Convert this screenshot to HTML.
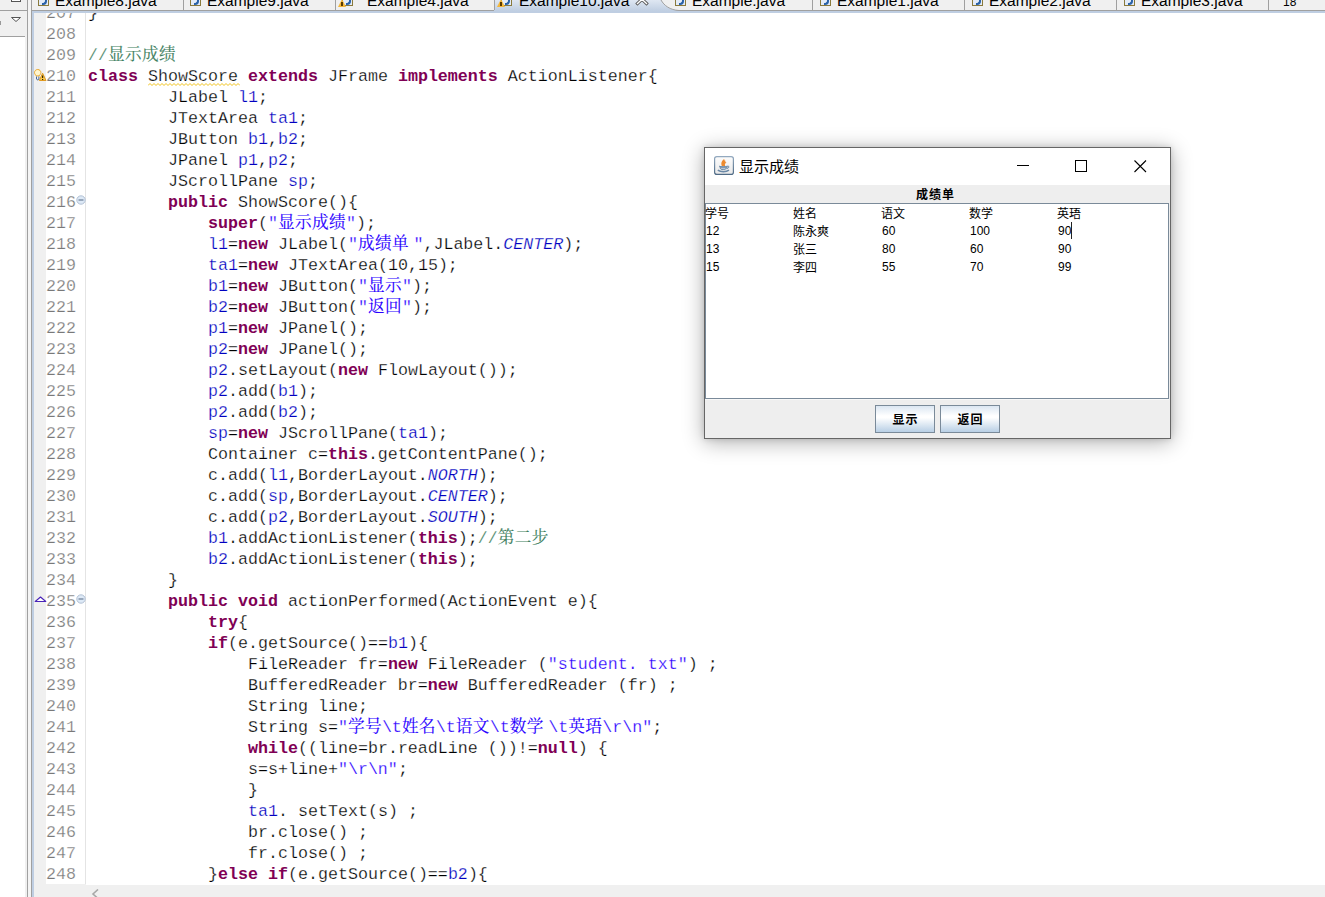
<!DOCTYPE html>
<html lang="zh"><head><meta charset="utf-8"><title>Example10.java - Eclipse</title>
<style>
html,body{margin:0;padding:0}
body{width:1325px;height:897px;overflow:hidden;position:relative;background:#fff;font-family:"Liberation Sans","Noto Sans CJK SC",sans-serif;color:#000}
div,span,b,i{box-sizing:border-box}
.abs{position:absolute}
/* left strip */
#lp{position:absolute;left:0;top:0;width:28px;height:897px;background:#f0f0f0;border-right:1px solid #a0a0a0}
#lp .h1{position:absolute;left:0;top:10px;width:27px;height:1px;background:#a0a0a0}
#lp .wh{position:absolute;left:0;top:36px;width:25px;height:861px;background:#fff;border-top:1px solid #a0a0a0}
.wi:after{content:"";position:absolute;left:-1px;top:3px;width:1.500px;height:4px;background:#5a3a00}
#gap{position:absolute;left:28px;top:0;width:3px;height:897px;background:#f4f4f4}
/* editor frame */
#ed{position:absolute;left:31px;top:0;width:1294px;height:897px;background:#fff;border-left:1px solid #a0a0a0;overflow:hidden}
#tabs{position:absolute;left:0;top:0;width:1293px;height:11px;background:#f0f0f0;overflow:hidden}
#tabline{position:absolute;left:0;top:10px;z-index:0;width:1293px;height:1px;background:#a0a0a0}
#band{position:absolute;left:0;top:11px;width:1293px;height:2px;background:#bfcee2}
#bandl{position:absolute;left:0;top:11px;width:2px;height:886px;background:#bfcee2}
.tab{position:absolute;top:0;height:10px;width:152px;border-right:1px solid #a0a0a0}
.tab .t{position:absolute;top:-9px;font-size:15.5px;line-height:20px;white-space:nowrap;color:#000}
.ji{position:absolute;top:-6px;width:11px;height:12px;border:1px solid #8a7a3c;background:#e4ecf8}
.ji:after{content:"";position:absolute;left:3px;top:3px;width:3px;height:5px;border:2px solid #2a62a8;border-top:none;border-left:none;border-radius:0 0 4px 0}
.wi{position:absolute;top:4px;left:-5px;z-index:2;border-bottom-color:#f3b63a !important;width:0;height:0;border-left:4px solid transparent;border-right:4px solid transparent;border-bottom:8px solid #e8a317}
#act{position:absolute;left:462px;top:0;width:190px;height:11px}
/* code */
#gut{position:absolute;left:2px;top:13px;width:12px;height:871px;background:#f0f0f0}
#sep{position:absolute;left:53px;top:13px;width:1px;height:871px;background:#e4e4e4}
#code{position:absolute;left:0;top:13px;width:1293px;height:871px;overflow:hidden;font-family:"Liberation Mono","Noto Sans CJK SC",monospace;font-size:16.667px}
#code .ln,#code .cl{position:absolute;height:21px;line-height:21px;white-space:pre}
#code .ln{left:14px;color:#787878;-webkit-text-stroke:.25px #fff}
#code .cl{left:56px;color:#000;-webkit-text-stroke:.25px #fff}
.k{color:#7f0055;font-weight:bold}
.f{color:#0000c0}
.s{color:#2a00ff}
.c{color:#3f7f5f}
.j{-webkit-text-stroke:.12px currentColor;line-height:0;position:relative;top:0;letter-spacing:.333px;font-family:"Noto Serif CJK SC","Noto Sans CJK SC",serif}
.n{letter-spacing:-5.5px}
.k,.k *{-webkit-text-stroke:0}
#hsb{position:absolute;left:2px;top:885px;width:1291px;height:12px;background:#f0f0f0}
#hsb2{position:absolute;left:2px;top:884px;width:52px;height:1px;background:#f0f0f0}
/* swing window */
#win{position:absolute;left:704px;top:147px;width:467px;height:292px;border:1px solid #666;background:#eee;box-shadow:0 3px 20px rgba(0,0,0,.32),0 0 6px rgba(0,0,0,.14)}
#tb{position:absolute;left:0;top:0;width:465px;height:37px;background:#fff}
#tb .tt{position:absolute;left:34px;top:8px;font-size:15px;line-height:22px;white-space:nowrap}
#lab{position:absolute;left:0;top:38px;width:461px;height:18px;text-align:center;font-size:12px;font-weight:bold;line-height:18px;letter-spacing:1px}
#ta{box-shadow:0 1px 0 #f8f8f8;position:absolute;left:0;top:55px;width:464px;height:196px;border:1px solid #7a8a99;background:#fff;font-size:12px}
#ta span{position:absolute;line-height:18px;white-space:nowrap;margin:1px 0 0 -1px}
#ta span.d{margin:0}
.btn{position:absolute;top:257px;width:60px;height:28px;border:1px solid #7a8a99;background:linear-gradient(#dbe6f2 0,#fff 38%,#fff 45%,#b8cfe5 100%);font-size:12px;font-weight:bold;text-align:center;line-height:28px;letter-spacing:1px;padding-left:1px}
</style></head><body>
<div id="lp"><div class="h1"></div><div class="wh"></div>
<svg class="abs" style="left:0;top:0" width="28" height="40"><rect x="11.5" y="-4.5" width="9" height="6" fill="#fff" stroke="#555"/><path d="M11.5 17.5h9l-4.5 4z" fill="#fff" stroke="#555" stroke-width="1"/><rect x="0" y="21" width="1" height="4" fill="#999"/></svg>
</div>
<div id="gap"></div>
<div id="ed">
 <div id="tabs"><div id="tabline"></div>
  <div class="tab" style="left:0"><span class="ji" style="left:6px"></span><span class="t" style="left:23px">Example8.java</span></div>
  <div class="tab" style="left:152px"><span class="ji" style="left:6px"></span><span class="t" style="left:23px">Example9.java</span></div>
  <div class="tab" style="left:304px;border-right:none"><span class="ji" style="left:6px"><span class="wi"></span></span><span class="t" style="left:31px">Example4.java</span></div>
  <svg id="act" width="190" height="11" viewBox="0 0 190 11"><defs><linearGradient id="ag" x1="0" y1="0" x2="0" y2="1"><stop offset="0" stop-color="#dfe7f2"/><stop offset="1" stop-color="#bfcee2"/></linearGradient></defs><path d="M0 0H167C170 5.500 176 10 185 10.500V11H0Z" fill="url(#ag)"/><path d="M.5 0V10M167 0C170 5.500 176 10 185 10.500" fill="none" stroke="#a0a0a0"/><path d="M143.500 -5L152.500 3.500M152.500 -5L143.500 3.500" stroke="#5a5a5a" stroke-width="3.200" stroke-linecap="square"/><path d="M143.500 -5L152.500 3.500M152.500 -5L143.500 3.500" stroke="#fff" stroke-width="1.400" stroke-linecap="square"/></svg>
  <div class="tab" style="left:462px;border:none;width:190px"><span class="ji" style="left:7px"><span class="wi"></span></span><span class="t" style="left:25px">Example10.java</span></div>
  <div class="tab" style="left:629px"><span class="ji" style="left:14px"></span><span class="t" style="left:31px">Example.java</span></div>
  <div class="tab" style="left:781px"><span class="ji" style="left:7px"></span><span class="t" style="left:24px">Example1.java</span></div>
  <div class="tab" style="left:933px"><span class="ji" style="left:7px"></span><span class="t" style="left:24px">Example2.java</span></div>
  <div class="tab" style="left:1085px"><span class="ji" style="left:7px"></span><span class="t" style="left:24px">Example3.java</span></div>
  <div class="tab" style="left:1237px;border:none"><span class="t" style="left:14px;font-size:12px;top:-8px">18</span></div>
 </div>
 <div id="band"></div><div id="bandl"></div>
 <div id="gut"></div><div id="sep"></div>
 <div id="code">
<div class="ln" style="top:-10px">207</div><div class="cl" style="top:-10px">}</div>
<div class="ln" style="top:11px">208</div><div class="cl" style="top:11px"></div>
<div class="ln" style="top:32px">209</div><div class="cl" style="top:32px"><span class="c">//<span class="j">显示成绩</span></span></div>
<div class="ln" style="top:53px">210</div><div class="cl" style="top:53px"><b class="k">class</b> <span class="w">ShowScore</span> <b class="k">extends</b> JFrame <b class="k">implements</b> ActionListener{</div>
<div class="ln" style="top:74px">211</div><div class="cl" style="top:74px">        JLabel <span class="f">l1</span>;</div>
<div class="ln" style="top:95px">212</div><div class="cl" style="top:95px">        JTextArea <span class="f">ta1</span>;</div>
<div class="ln" style="top:116px">213</div><div class="cl" style="top:116px">        JButton <span class="f">b1</span>,<span class="f">b2</span>;</div>
<div class="ln" style="top:137px">214</div><div class="cl" style="top:137px">        JPanel <span class="f">p1</span>,<span class="f">p2</span>;</div>
<div class="ln" style="top:158px">215</div><div class="cl" style="top:158px">        JScrollPane <span class="f">sp</span>;</div>
<div class="ln" style="top:179px">216</div><div class="cl" style="top:179px">        <b class="k">public</b> ShowScore(){</div>
<div class="ln" style="top:200px">217</div><div class="cl" style="top:200px">            <b class="k">super</b>(<span class="s">"<span class="j">显示成绩</span>"</span>);</div>
<div class="ln" style="top:221px">218</div><div class="cl" style="top:221px">            <span class="f">l1</span>=<b class="k">new</b> JLabel(<span class="s">"<span class="j">成绩单</span><span class="n"> </span>"</span>,JLabel.<i class="f">CENTER</i>);</div>
<div class="ln" style="top:242px">219</div><div class="cl" style="top:242px">            <span class="f">ta1</span>=<b class="k">new</b> JTextArea(10,15);</div>
<div class="ln" style="top:263px">220</div><div class="cl" style="top:263px">            <span class="f">b1</span>=<b class="k">new</b> JButton(<span class="s">"<span class="j">显示</span>"</span>);</div>
<div class="ln" style="top:284px">221</div><div class="cl" style="top:284px">            <span class="f">b2</span>=<b class="k">new</b> JButton(<span class="s">"<span class="j">返回</span>"</span>);</div>
<div class="ln" style="top:305px">222</div><div class="cl" style="top:305px">            <span class="f">p1</span>=<b class="k">new</b> JPanel();</div>
<div class="ln" style="top:326px">223</div><div class="cl" style="top:326px">            <span class="f">p2</span>=<b class="k">new</b> JPanel();</div>
<div class="ln" style="top:347px">224</div><div class="cl" style="top:347px">            <span class="f">p2</span>.setLayout(<b class="k">new</b> FlowLayout());</div>
<div class="ln" style="top:368px">225</div><div class="cl" style="top:368px">            <span class="f">p2</span>.add(<span class="f">b1</span>);</div>
<div class="ln" style="top:389px">226</div><div class="cl" style="top:389px">            <span class="f">p2</span>.add(<span class="f">b2</span>);</div>
<div class="ln" style="top:410px">227</div><div class="cl" style="top:410px">            <span class="f">sp</span>=<b class="k">new</b> JScrollPane(<span class="f">ta1</span>);</div>
<div class="ln" style="top:431px">228</div><div class="cl" style="top:431px">            Container c=<b class="k">this</b>.getContentPane();</div>
<div class="ln" style="top:452px">229</div><div class="cl" style="top:452px">            c.add(<span class="f">l1</span>,BorderLayout.<i class="f">NORTH</i>);</div>
<div class="ln" style="top:473px">230</div><div class="cl" style="top:473px">            c.add(<span class="f">sp</span>,BorderLayout.<i class="f">CENTER</i>);</div>
<div class="ln" style="top:494px">231</div><div class="cl" style="top:494px">            c.add(<span class="f">p2</span>,BorderLayout.<i class="f">SOUTH</i>);</div>
<div class="ln" style="top:515px">232</div><div class="cl" style="top:515px">            <span class="f">b1</span>.addActionListener(<b class="k">this</b>);<span class="c">//<span class="j">第二步</span></span></div>
<div class="ln" style="top:536px">233</div><div class="cl" style="top:536px">            <span class="f">b2</span>.addActionListener(<b class="k">this</b>);</div>
<div class="ln" style="top:557px">234</div><div class="cl" style="top:557px">        }</div>
<div class="ln" style="top:578px">235</div><div class="cl" style="top:578px">        <b class="k">public</b> <b class="k">void</b> actionPerformed(ActionEvent e){</div>
<div class="ln" style="top:599px">236</div><div class="cl" style="top:599px">            <b class="k">try</b>{</div>
<div class="ln" style="top:620px">237</div><div class="cl" style="top:620px">            <b class="k">if</b>(e.getSource()==<span class="f">b1</span>){</div>
<div class="ln" style="top:641px">238</div><div class="cl" style="top:641px">                FileReader fr=<b class="k">new</b> FileReader (<span class="s">"student. txt"</span>) ;</div>
<div class="ln" style="top:662px">239</div><div class="cl" style="top:662px">                BufferedReader br=<b class="k">new</b> BufferedReader (fr) ;</div>
<div class="ln" style="top:683px">240</div><div class="cl" style="top:683px">                String line;</div>
<div class="ln" style="top:704px">241</div><div class="cl" style="top:704px">                String s=<span class="s">"<span class="j">学号</span>\t<span class="j">姓名</span>\t<span class="j">语文</span>\t<span class="j">数学</span><span class="n"> </span>\t<span class="j">英珸</span>\r\n"</span>;</div>
<div class="ln" style="top:725px">242</div><div class="cl" style="top:725px">                <b class="k">while</b>((line=br.readLine ())!=<b class="k">null</b>) {</div>
<div class="ln" style="top:746px">243</div><div class="cl" style="top:746px">                s=s+line+<span class="s">"\r\n"</span>;</div>
<div class="ln" style="top:767px">244</div><div class="cl" style="top:767px">                }</div>
<div class="ln" style="top:788px">245</div><div class="cl" style="top:788px">                <span class="f">ta1</span>. setText(s) ;</div>
<div class="ln" style="top:809px">246</div><div class="cl" style="top:809px">                br.close() ;</div>
<div class="ln" style="top:830px">247</div><div class="cl" style="top:830px">                fr.close() ;</div>
<div class="ln" style="top:851px">248</div><div class="cl" style="top:851px">            }<b class="k">else</b> <b class="k">if</b>(e.getSource()==<span class="f">b2</span>){</div>
 </div>

 <svg class="abs" style="left:2px;top:68px" width="13" height="14" viewBox="0 0 13 14"><path d="M3.700 1.500c-2 0-3.200 1.600-3.200 3.100 0 1.300 1.100 2.200 1.700 3.300h3c.6-1.100 1.700-2 1.700-3.300 0-1.500-1.200-3.100-3.200-3.100z" fill="#fff6cf" stroke="#e8a62a"/><path d="M2.500 8.500v2.500c.5 1.200 1.900 1.200 2.400 0V8.500" fill="none" stroke="#4a6a9a" stroke-width="1"/><path d="M8.600 5.200L5.300 12.500h6.700z" fill="#f7c64a" stroke="#e09a20" stroke-linejoin="round"/><path d="M8.600 7.500v2.600M8.600 11v.9" stroke="#3a2a00" stroke-width="1.200"/></svg>
 <svg class="abs" style="left:44px;top:195px" width="10" height="10"><circle cx="5" cy="5" r="4.200" fill="#dde9f6" stroke="#b3c1d4"/><path d="M2.500 5h5" stroke="#6b7d96" stroke-width="1.200"/></svg>
 <svg class="abs" style="left:44px;top:594px" width="10" height="10"><circle cx="5" cy="5" r="4.200" fill="#dde9f6" stroke="#b3c1d4"/><path d="M2.500 5h5" stroke="#6b7d96" stroke-width="1.200"/></svg>
 <svg class="abs" style="left:2px;top:595px" width="13" height="9"><path d="M1.200 6.500L6.500 2l5.300 4.500z" fill="#fff" stroke="#4a24b8" stroke-width="1.100" stroke-linejoin="round"/></svg>
 <svg class="abs" style="left:116px;top:83px" width="92" height="4"><path d="M0 2.500l2 -2l2 2l2 -2l2 2l2 -2l2 2l2 -2l2 2l2 -2l2 2l2 -2l2 2l2 -2l2 2l2 -2l2 2l2 -2l2 2l2 -2l2 2l2 -2l2 2l2 -2l2 2l2 -2l2 2l2 -2l2 2l2 -2l2 2l2 -2l2 2l2 -2l2 2l2 -2l2 2l2 -2l2 2l2 -2l2 2l2 -2l2 2l2 -2l2 2l2 -2l2 2" fill="none" stroke="#f0c21a" stroke-width="1"/></svg>
 <div id="hsb2"></div><div id="hsb"><svg class="abs" style="left:57px;top:4px" width="10" height="10"><path d="M7 .5L2 5l5 4.5" fill="none" stroke="#a8a8a8" stroke-width="1.6"/></svg></div>
</div>
<div id="win">
 <div id="tb">
  <svg class="abs" style="left:9px;top:8px" width="21" height="20" viewBox="0 0 21 20"><defs><linearGradient id="jg" x1="0" y1="0" x2="0" y2="1"><stop offset="0" stop-color="#fcfcfc"/><stop offset="1" stop-color="#e9e9e9"/></linearGradient><linearGradient id="jb" x1="0" y1="0" x2="0" y2="1"><stop offset="0" stop-color="#93a9bf"/><stop offset="1" stop-color="#4f6b86"/></linearGradient></defs><rect x=".6" y=".6" width="18.800" height="17.800" rx="2.200" fill="url(#jg)" stroke="url(#jb)" stroke-width="1.200"/><path d="M10.300 2.900c-2.300 1.400-3.800 4-2.400 7h3.300c-.8-1.500 0-2.500 1.400-3.600-1.200.1-1.600-.6-1-1.500-.9-.2-1.500-.9-1.300-1.900z" fill="#ec8a2e"/><path d="M5 10.200c2.600.8 5.600.8 8.300 0M6 11.200c.2 1.700 1 2.500 3.200 2.500s3.100-.8 3.300-2.500zM13.200 10.300c2.200-.8 2.600 1.600-.6 2.400" fill="#8aa2ba" fill-opacity=".55" stroke="#6a88a6" stroke-width="1"/><path d="M3.800 14.200c2.800 1.900 8.400 1.900 11.200 0" fill="none" stroke="#6a88a6" stroke-width="1.500"/></svg>
  <span class="tt">显示成绩</span>
  <svg class="abs" style="left:300px;top:5px" width="160" height="26"><path d="M12 12.500h12" stroke="#000" stroke-width="1"/><rect x="70.500" y="7.500" width="11" height="11" fill="none" stroke="#000"/><path d="M129.500 7.500l11.500 11.500M141 7.500L129.500 19" stroke="#000" stroke-width="1.100" fill="none"/></svg>
 </div>
 <div id="lab">成绩单</div>
 <div id="ta">
  <span style="left:0;top:0">学号</span><span style="left:88px;top:0">姓名</span><span style="left:176px;top:0">语文</span><span style="left:264px;top:0">数学</span><span style="left:352px;top:0">英珸</span>
  <span class="d" style="left:0;top:18px">12</span><span style="left:88px;top:18px">陈永爽</span><span class="d" style="left:176px;top:18px">60</span><span class="d" style="left:264px;top:18px">100</span><span class="d" style="left:352px;top:18px">90</span>
  <span class="d" style="left:0;top:36px">13</span><span style="left:88px;top:36px">张三</span><span class="d" style="left:176px;top:36px">80</span><span class="d" style="left:264px;top:36px">60</span><span class="d" style="left:352px;top:36px">90</span>
  <span class="d" style="left:0;top:54px">15</span><span style="left:88px;top:54px">李四</span><span class="d" style="left:176px;top:54px">55</span><span class="d" style="left:264px;top:54px">70</span><span class="d" style="left:352px;top:54px">99</span>
  <span style="left:366px;top:17px;width:1px;height:17px;background:#222"></span>
 </div>
 <div class="btn" style="left:170px">显示</div><div class="btn" style="left:235px">返回</div>
</div>
</body></html>
